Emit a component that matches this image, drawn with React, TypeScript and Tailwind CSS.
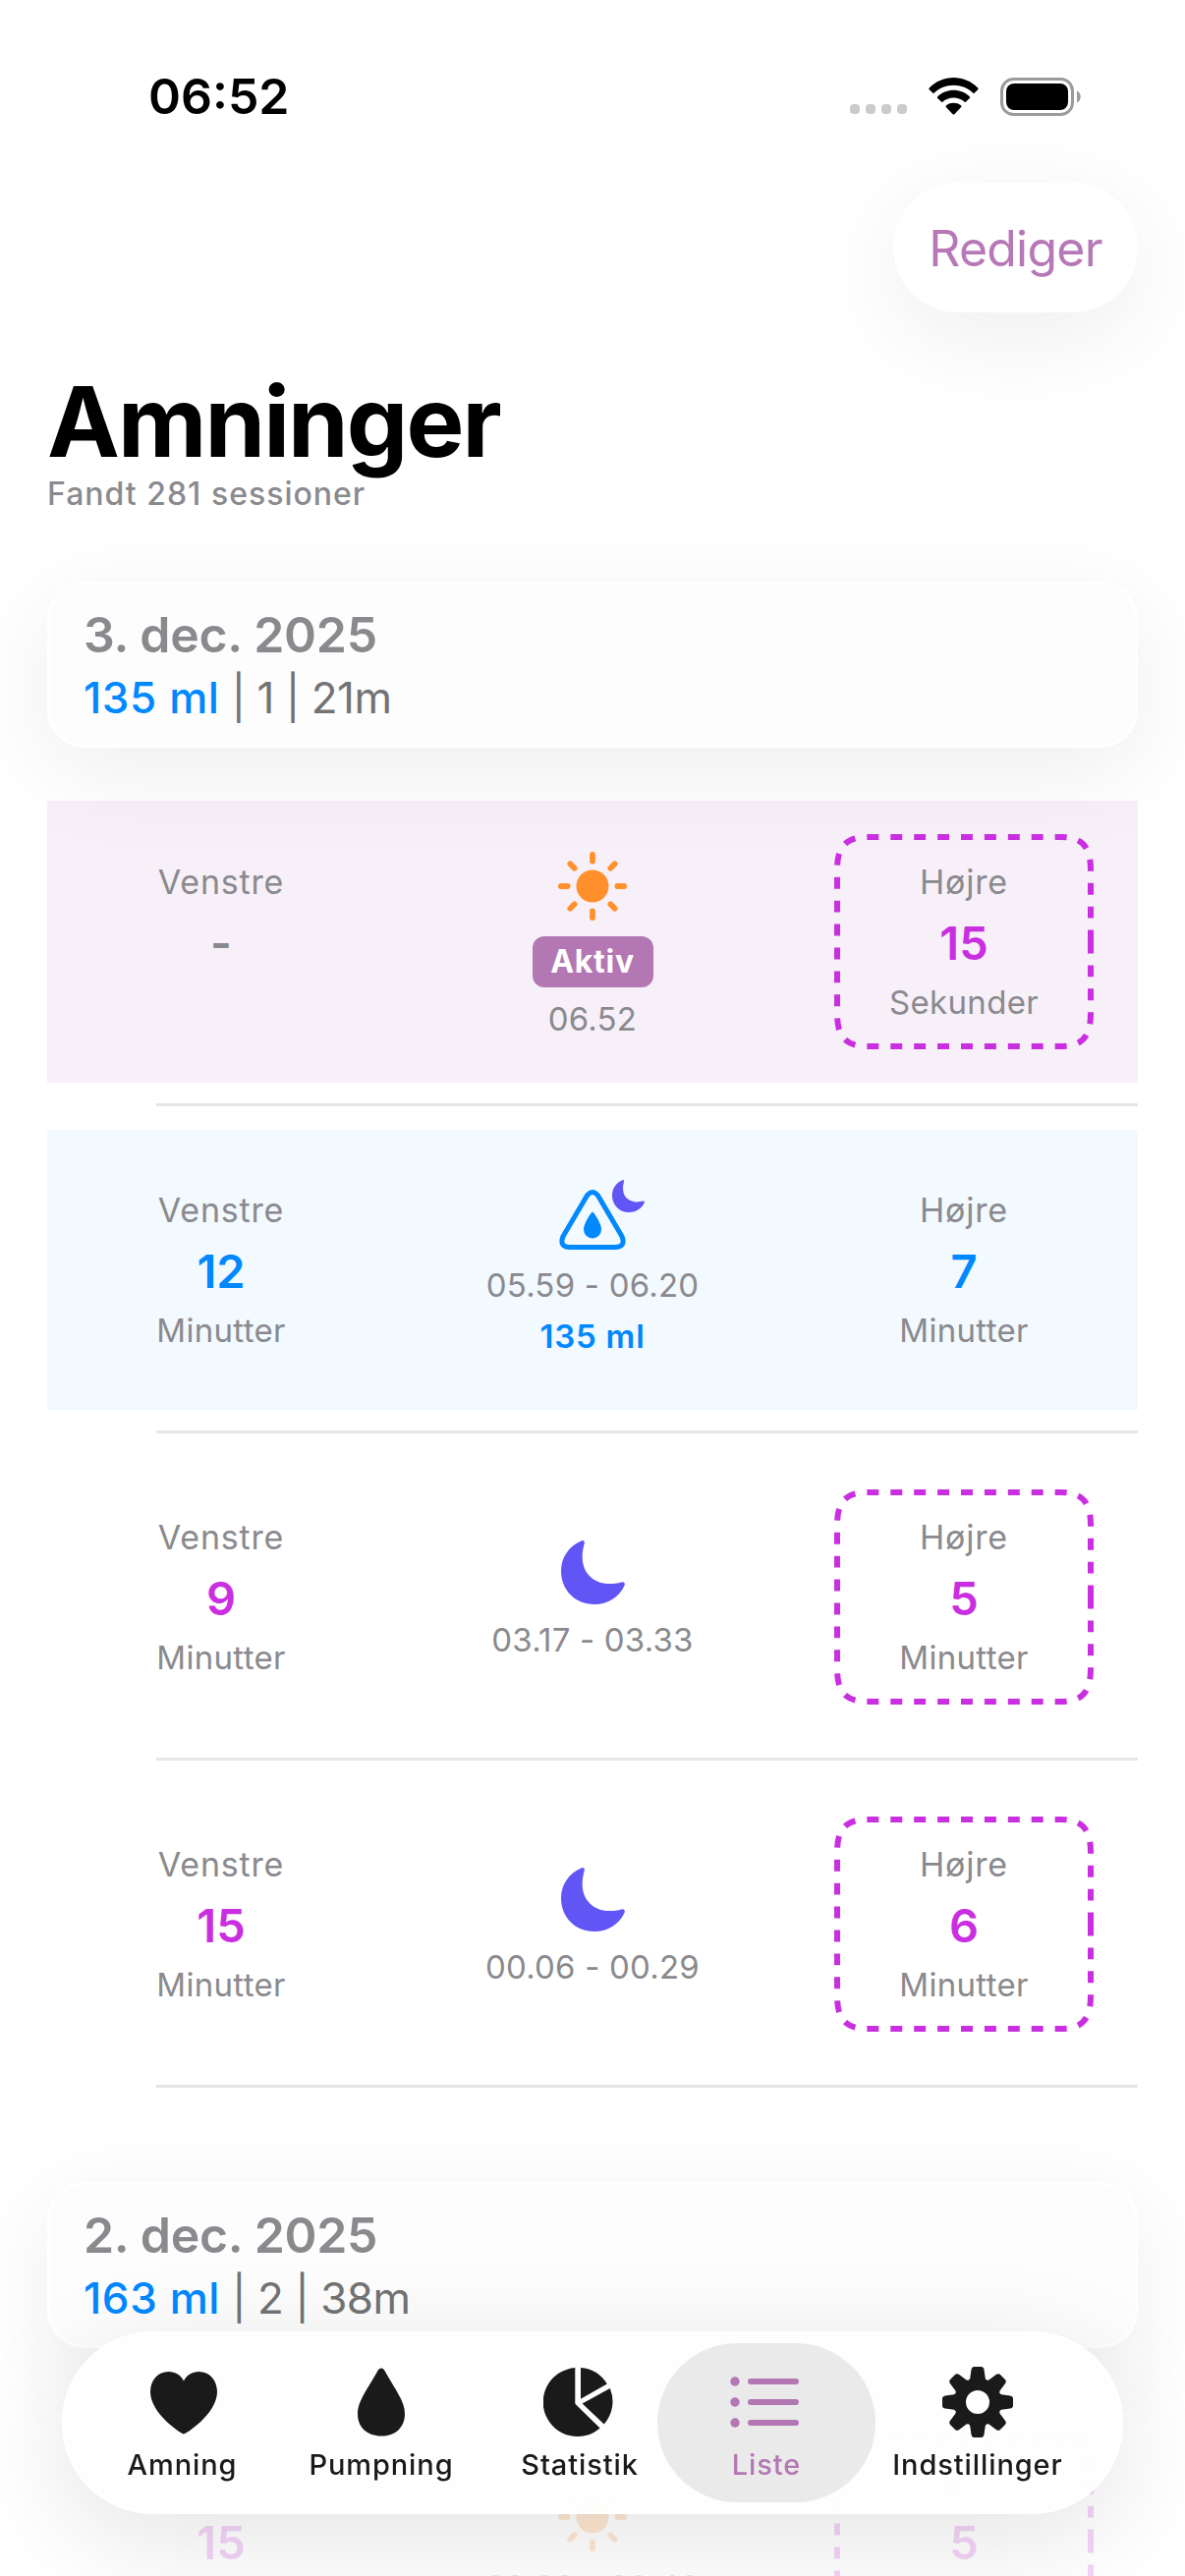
import type { ReactNode } from 'react'

interface Side {
  value: string
  unit?: string
  last?: boolean
}

interface Session {
  id: number
  icon: 'sun' | 'moon' | 'bottle'
  time: string
  left: Side
  right: Side
  active?: boolean
  amount?: string
}

const FIRST_DAY: Session[] = [
  { id: 1, icon: 'sun', time: '06.52', active: true, left: { value: '-' }, right: { value: '15', unit: 'Sekunder', last: true } },
  { id: 2, icon: 'bottle', time: '05.59 - 06.20', amount: '135 ml', left: { value: '12', unit: 'Minutter' }, right: { value: '7', unit: 'Minutter' } },
  { id: 3, icon: 'moon', time: '03.17 - 03.33', left: { value: '9', unit: 'Minutter' }, right: { value: '5', unit: 'Minutter', last: true } },
  { id: 4, icon: 'moon', time: '00.06 - 00.29', left: { value: '15', unit: 'Minutter' }, right: { value: '6', unit: 'Minutter', last: true } },
]

const SECOND_DAY: Session[] = [
  { id: 5, icon: 'sun', time: '22.28 - 22.48', left: { value: '15', unit: 'Minutter' }, right: { value: '5', unit: 'Minutter', last: true } },
]

const RAYS = [0, 45, 90, 135, 180, 225, 270, 315]

function Sun() {
  return (
    <svg className="w-[70px] h-[70px] text-[#ff902b]" viewBox="-35 -35 70 70" fill="currentColor">
      <circle r="16.5" />
      {RAYS.map(a => (
        <rect key={a} x="-2.9" y="-35" width="5.8" height={a % 90 === 0 ? 12.5 : 12} rx="2.9" transform={`rotate(${a})`} />
      ))}
    </svg>
  )
}

function Moon({ className }: { className: string }) {
  return (
    <svg className={className} viewBox="0 0 65 65" fill="#6155f5">
      <path d="M20.5 .4C22.8 -.5 24.4 .8 23.6 3.4C19 20 23 31.500 31 38C39 44.500 50 45.500 61.500 42.500C64 41.800 65.500 43.500 64.500 46C59.500 57.500 47.500 65 34 65C14.500 65 0 50.500 0 31C0 17.500 8 5.500 20.500 .4Z" />
    </svg>
  )
}

function Bottle() {
  return (
    <div className="relative">
      <svg className="w-[68px] h-[61px]" viewBox="0 0 68 61">
        <path
          d="M28.700 5.600Q34 -.4 39.300 5.600L64 47.500Q68 58 57.500 58.500H10.500Q0 58 4 47.500Z"
          fill="none"
          stroke="#0088ff"
          strokeWidth="5"
          strokeLinejoin="round"
        />
        <path d="M34 22.500C35 22.500 43 34 43 40.500A9 9 0 0 1 25 40.500C25 34 33 22.500 34 22.500Z" fill="#0088ff" />
      </svg>
      <Moon className="absolute -top-[10px] left-[54px] w-[33px] h-[33px]" />
    </div>
  )
}

// Dashed frame around the side that was used last
function DashedFrame() {
  return (
    <svg className="absolute inset-0 w-[264px] h-[219px]" viewBox="0 0 264 219" fill="none">
      <path
        d="M261 109.500V182.500C261 207 252 216 230 216H34C12 216 3 207 3 182.500V36.500C3 12 12 3 34 3H230C252 3 261 12 261 36.500Z"
        pathLength="900"
        stroke="#c92fe0"
        strokeWidth="6"
        strokeDasharray="12 12"
      />
    </svg>
  )
}

function SideColumn({ label, side, color }: { label: string; side: Side; color: string }) {
  return (
    <div className="relative w-[264px] h-[219px] pt-[19px] text-center text-[#8a8a8e]">
      {side.last && <DashedFrame />}
      <div className="text-[34px] leading-[60px] tracking-[0.8px]">{label}</div>
      <div className={`text-[47px] leading-[64px] font-semibold ${side.unit ? color : ''}`}>{side.value}</div>
      <div className="text-[33px] leading-[56px] tracking-[0.3px]">{side.unit}</div>
    </div>
  )
}

function SessionRow({ session }: { session: Session }) {
  const color = session.amount ? 'text-[#0088ff]' : 'text-[#c92fe0]'
  let frame = 'mt-[24px] h-[285px]'
  if (session.active) frame = 'mt-[22px] h-[287px] bg-[rgba(179,110,186,0.105)]'
  if (session.amount) frame = 'mt-[24px] h-[285px] bg-[#0088ff]/5'

  return (
    <li className="h-[333px] flex flex-col justify-between">
      <div className={`flex items-center px-[45px] ${frame}`}>
        <SideColumn label="Venstre" side={session.left} color={color} />
        <div className="flex-1 flex flex-col items-center justify-center pt-3">
          {session.icon === 'sun' && <Sun />}
          {session.icon === 'moon' && <Moon className="w-[65px] h-[65px]" />}
          {session.icon === 'bottle' && <Bottle />}
          <div className="h-2.5" />
          {session.active && (
            <span className="my-1.5 h-[52px] w-[123px] rounded-xl bg-[#b377b3] text-center text-[32px] leading-[52px] font-bold tracking-[0.7px] text-white">
              Aktiv
            </span>
          )}
          <span className="text-[33px] leading-[52px] whitespace-nowrap tracking-[0.2px] text-[#8a8a8e]">{session.time}</span>
          {session.amount && (
            <span className="text-[33px] leading-[52px] font-semibold tracking-[0.8px] text-[#0088ff]">{session.amount}</span>
          )}
        </div>
        <SideColumn label="Højre" side={session.right} color={color} />
      </div>
      <div className="ml-[111px] h-[3px] bg-[#e6e6e6]" />
    </li>
  )
}

function DayCard({ date, amount, rest }: { date: string; amount: string; rest: string }) {
  return (
    <div className="h-[169px] rounded-[38px] border-[3px] border-white bg-[#fdfdfd] px-[34px] pt-[21px] shadow-[0_24px_100px_rgba(0,0,0,0.07)]">
      <div className="text-[50px] leading-[61px] font-semibold tracking-[-0.3px] text-[#8a8a8e]">{date}</div>
      <div className="text-[44px] leading-[67px] tracking-[-0.5px] text-[#737373]">
        <span className="font-medium tracking-[0.6px] text-[#0088ff]">{amount}</span> {rest}
      </div>
    </div>
  )
}

function StatusBar() {
  return (
    <div className="flex h-[186px] items-center justify-between pt-2.5 pl-[151px] pr-[106px]">
      <span className="text-[50px] leading-none font-semibold">06:52</span>
      <div className="flex items-center">
        <div className="mt-[26px] flex gap-1.5">
          {[0, 1, 2, 3].map(i => (
            <span key={i} className="size-2.5 rounded-[4px] bg-[#cbcbcb]" />
          ))}
        </div>
        <svg className="ml-[22px] w-[51px] h-[38px]" viewBox="0 0 51 38">
          <path d="M.8 10.500C14 -3.500 37 -3.500 50.200 10.500Q51 11.500 50.200 12.300L46 16.200C34.500 5 16.500 5 5 16.200L.8 12.300Q0 11.500 .8 10.500Z" />
          <path d="M9.200 19.200C18 10.500 33 10.500 41.800 19.200Q42.600 20.200 41.800 21L37.300 25.200C30.500 19 20.500 19 13.700 25.200L9.200 21Q8.400 20.200 9.200 19.200Z" />
          <path d="M18 28.200C22 24.900 29 24.900 33 28.200Q34 29.100 33.200 30L26.400 37.200Q25.500 38 24.600 37.200L17.800 30Q17 29.100 18 28.200Z" />
        </svg>
        <svg className="ml-[22px] w-[82px] h-[39px]" viewBox="0 0 82 39">
          <rect x="1.500" y="1.500" width="72" height="36" rx="12" fill="none" stroke="#9b9b9b" strokeWidth="3" />
          <rect x="6" y="6" width="63" height="27" rx="8" />
          <path d="M78 13.500C83 15.500 83 23.500 78 25.500Z" fill="#9b9b9b" />
        </svg>
      </div>
    </div>
  )
}

function TabItem({ label, width, active, children }: { label: string; width: string; active?: boolean; children: ReactNode }) {
  return (
    <div
      className={[
        'flex h-[162px] flex-col items-center rounded-full pt-[23px]',
        width,
        active ? 'bg-[#eaeaea] text-[#b377b3]' : 'text-[#1a1a1a]',
      ].join(' ')}
    >
      <svg className="h-[74px] w-[74px]" viewBox="-37 -37 74 74" fill="currentColor">
        {children}
      </svg>
      <span className="text-[29px] leading-[53px] font-medium tracking-[0.9px]">{label}</span>
    </div>
  )
}

function TabBar() {
  return (
    <nav className="absolute bottom-[63px] left-[63px] flex h-[186px] w-[1080px] items-center rounded-full border-[3px] border-white bg-[#fefefe]/93 shadow-[0_24px_110px_rgba(0,0,0,0.11)] backdrop-blur-[3px]">
      <TabItem label="Amning" width="ml-[18px] w-[203px]">
        <path transform="translate(1 0)" d="M0 32.500C-2 32.500 -34 12 -34 -10.500C-34 -22.500 -26 -31 -15.500 -31C-8.500 -31 -3 -27.500 0 -21.500C3 -27.500 8.500 -31 15.500 -31C26 -31 34 -22.500 34 -10.500C34 12 2 32.500 0 32.500Z" />
      </TabItem>
      <TabItem label="Pumpning" width="w-[202px]">
        <path d="M0 -34.500C1.500 -34.500 2.700 -33.500 3.500 -32C14 -13 24 -1 24 12C24 26 14 34.500 0 34.500S-24 26 -24 12C-24 -1 -14 -13 -3.500 -32C-2.700 -33.500 -1.500 -34.500 0 -34.500Z" />
      </TabItem>
      <TabItem label="Statistik" width="w-[202px]">
        <path d="M-4.700 -34.900V.8C-4.700 1.500 -4.500 2 -3.900 2.600L20.600 26.500A35 35 0 1 1 -4.700 -34.900Z" />
        <path d="M1 -34.900V-3.300L27.800 -18.500A35 35 0 0 0 1 -34.900Z" />
        <path d="M30.800 -14L2.600 1.500L24.800 22.500A35 35 0 0 0 30.800 -14Z" />
      </TabItem>
      <TabItem label="Liste" width="-ml-[22px] w-[222px]" active>
        {[-21, 0, 21].map(y => (
          <g key={y}>
            <circle cx="-32" cy={y} r="4.700" />
            <rect x="-19" y={y - 3} width="52" height="6" rx="3" />
          </g>
        ))}
      </TabItem>
      <TabItem label="Indstillinger" width="-ml-[2px] w-[212px]">
        <path
          fillRule="evenodd"
          d="M-24 0A24 24 0 1 0 24 0A24 24 0 1 0 -24 0ZM-12 0A12 12 0 1 1 12 0A12 12 0 1 1 -12 0Z"
        />
        {RAYS.map(a => (
          <path key={a} transform={`rotate(${a})`} d="M-10 -21L-7.800 -24L-6.500 -33Q-6 -36 -3.500 -36H3.500Q6 -36 6.500 -33L7.800 -24L10 -21Z" />
        ))}
      </TabItem>
    </nav>
  )
}

export default function App() {
  return (
    <div className="relative h-[2622px] w-[1206px] overflow-hidden bg-white font-['Inter','Liberation_Sans',sans-serif] text-black">
      <StatusBar />

      <div className="flex justify-end pr-12">
        <button className="h-[132px] w-[249px] rounded-full bg-white pt-0.5 text-[50px] tracking-[-0.8px] text-[#b678b6] shadow-[0_24px_100px_rgba(0,0,0,0.07)]">
          Rediger
        </button>
      </div>

      <main className="px-12">
        <h1 className="mt-[54px] text-[99px] leading-[114px] font-bold tracking-[-1.9px]">Amninger</h1>
        <p className="text-[32px] leading-[34px] font-medium tracking-[1px] text-[#8a8a8e]">Fandt 281 sessioner</p>

        <section className="mt-[72px]">
          <DayCard date="3. dec. 2025" amount="135 ml" rest="| 1 | 21m" />
          <ul className="mt-8">
            {FIRST_DAY.map(s => (
              <SessionRow key={s.id} session={s} />
            ))}
          </ul>
        </section>

        <section className="mt-24">
          <DayCard date="2. dec. 2025" amount="163 ml" rest="| 2 | 38m" />
          <ul className="mt-[30px] opacity-20">
            {SECOND_DAY.map(s => (
              <SessionRow key={s.id} session={s} />
            ))}
          </ul>
        </section>
      </main>

      <TabBar />
    </div>
  )
}
